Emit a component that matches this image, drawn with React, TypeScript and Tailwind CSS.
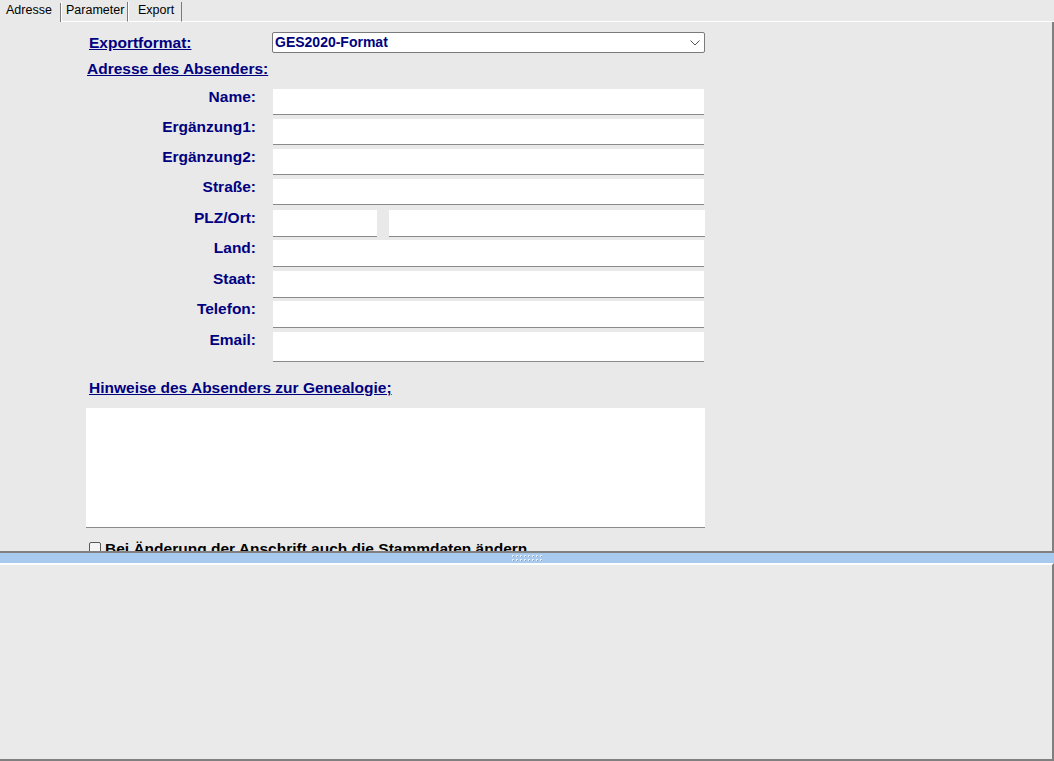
import React from "react";

const labelCls = "text-[15.5px] font-bold text-[#000080] leading-[16px]";

function Row({ label, h = 30, inputH = 26, children }: { label: string; h?: number; inputH?: number; children?: React.ReactNode }) {
  return (
    <div className="flex items-start" style={{ height: h }}>
      <div className={`w-[256px] text-right ${labelCls}`}>{label}</div>
      <div className="ml-[17px] flex">
        {children ?? <div className="w-[431px] bg-white border-b border-[#8a8a8a]" style={{ height: inputH }} />}
      </div>
    </div>
  );
}

export default function App() {
  return (
    <div className="w-[1054px] h-[761px] bg-[#e9e9e9] flex flex-col overflow-hidden" style={{ fontFamily: '"Liberation Sans", Arial, sans-serif' }}>
      {/* Tabs */}
      <div className="h-[22px] flex items-end text-[12.5px] text-black shrink-0">
        <div className="h-[22px] w-[61px] pl-[6px] pt-[3px] leading-[14px] flex">
          <span className="flex-1">Adresse</span>
          <span className="w-px h-[19px] mt-[0px] bg-[#7a7a7a]" />
        </div>
        <div className="h-[20px] w-[67px] pl-[4px] pt-[1px] leading-[14px] border-l border-l-white border-r border-r-[#7a7a7a] border-b border-b-white">Parameter</div>
        <div className="h-[20px] w-[54px] pl-[9px] pt-[1px] leading-[14px] border-l border-l-white border-r border-r-[#7a7a7a] border-b border-b-white">Export</div>
        <div className="flex-1 h-[20px] border-b border-b-white" />
      </div>

      {/* Top panel */}
      <div className="h-[531px] shrink-0 relative overflow-hidden border-r-2 border-r-[#808080] border-b-2 border-b-[#808080]">
        <div className="pt-[10px]">
          <div className="flex items-center h-[21px]">
            <div className={`ml-[89px] w-[183px] underline ${labelCls}`}>Exportformat:</div>
            <div className="w-[433px] h-[21px] bg-white border border-[#7a7a7a] rounded-[2px] flex items-center justify-between pl-[2px] pr-[4px]">
              <span className="text-[14px] font-bold text-[#000080]">GES2020-Format</span>
              <svg width="10" height="6" viewBox="0 0 10 6"><path d="M0.5 0.5 L5 5 L9.5 0.5" fill="none" stroke="#555" strokeWidth="1" /></svg>
            </div>
          </div>
          <div className={`ml-[87px] mt-[8px] h-[28px] underline ${labelCls}`}>Adresse des Absenders:</div>
          <Row label="Name:" />
          <Row label="Ergänzung1:" />
          <Row label="Ergänzung2:" />
          <Row label="Straße:" h={31} />
          <Row label="PLZ/Ort:">
            <div className="w-[104px] h-[27px] bg-white border-b border-[#8a8a8a]" />
            <div className="ml-[12px] w-[316px] h-[27px] bg-white border-b border-[#8a8a8a]" />
          </Row>
          <Row label="Land:" h={31} inputH={27} />
          <Row label="Staat:" inputH={27} />
          <Row label="Telefon:" h={31} inputH={27} />
          <Row label="Email:" h={30} inputH={30} />
          <div className={`ml-[89px] mt-[18px] h-[28px] underline ${labelCls}`}>Hinweise des Absenders zur Genealogie;</div>
          <div className="ml-[86px] w-[619px] h-[120px] bg-white border-b border-[#8a8a8a]" />
          <div className="ml-[89px] mt-[13px] flex items-start">
            <div className="w-[12px] h-[12px] mt-[1px] border border-[#5a5a5a] rounded-[2px] bg-[#f4f4f4]" />
            <span className="ml-[4px] text-[15.5px] font-bold text-black leading-[16px]">Bei Änderung der Anschrift auch die Stammdaten ändern</span>
          </div>
        </div>
      </div>

      {/* Splitter */}
      <div className="h-[10px] shrink-0 bg-[#a8caee] flex items-center justify-center">
        <svg width="30" height="6" viewBox="0 0 30 6">
          {[0, 1, 2, 3, 4, 5, 6, 7].map((i) => (
            <g key={i}>
              <rect x={i * 4} y={0} width={2} height={2} fill="#e6eef8" />
              <rect x={i * 4} y={4} width={2} height={2} fill="#e6eef8" />
              <rect x={i * 4 + 1} y={1} width={1} height={1} fill="#7f9fc6" />
              <rect x={i * 4 + 1} y={5} width={1} height={1} fill="#7f9fc6" />
            </g>
          ))}
        </svg>
      </div>

      {/* Bottom panel */}
      <div className="flex-1 border-t-2 border-t-white bg-[#eaeaea] border-r-2 border-r-[#808080] border-b-2 border-b-[#808080]" />
    </div>
  );
}
